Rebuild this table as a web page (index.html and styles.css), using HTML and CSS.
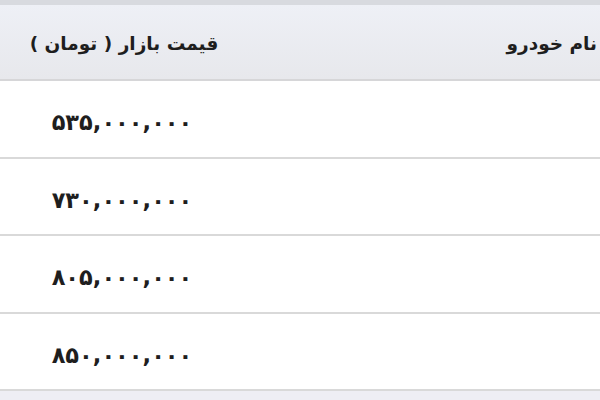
FILE: index.html
```html
<!DOCTYPE html>
<html lang="fa">
<head>
<meta charset="utf-8">
<link rel="stylesheet" href="styles.css">
</head>
<body>
<div class="topband"></div>
<div class="table" dir="rtl">
  <div class="row head">
    <div class="cell name">نام خودرو</div>
    <div class="cell price">قیمت بازار ( تومان )</div>
  </div>
  <div class="row">
    <div class="cell name"></div>
    <div class="cell price num">۵۳۵,۰۰۰,۰۰۰</div>
  </div>
  <div class="row">
    <div class="cell name"></div>
    <div class="cell price num">۷۳۰,۰۰۰,۰۰۰</div>
  </div>
  <div class="row">
    <div class="cell name"></div>
    <div class="cell price num">۸۰۵,۰۰۰,۰۰۰</div>
  </div>
  <div class="row">
    <div class="cell name"></div>
    <div class="cell price num">۸۵۰,۰۰۰,۰۰۰</div>
  </div>
</div>
</body>
</html>
```
FILE: styles.css
```css
html, body {
  margin: 0;
  padding: 0;
  width: 600px;
  height: 400px;
  overflow: hidden;
  background: #eeeef4;
}
body {
  font-family: Tahoma, "DejaVu Sans", sans-serif;
  color: #1e1e1e;
}
.topband {
  height: 5px;
  background: #d8dadf;
}
.table {
  width: 600px;
  background: #ffffff;
}
.row {
  display: grid;
  grid-template-columns: 352px 248px;
  height: 75.5px;
  border-bottom: 2px solid #d9d9d9;
  align-items: center;
}
.row.head {
  height: 74px;
  border-bottom: 2px solid #d6d6d8;
  background: linear-gradient(#eef0f6, #e7e8ec);
}
.cell {
  font-size: 18.5px;
  font-weight: bold;
}
.row.head .cell {
  padding-top: 3px;
}
.name {
  text-align: right;
  padding-right: 3px;
}
.price {
  text-align: center;
}
.num {
  font-size: 22.5px;
  padding-top: 7px;
  padding-right: 4px;
}
```
